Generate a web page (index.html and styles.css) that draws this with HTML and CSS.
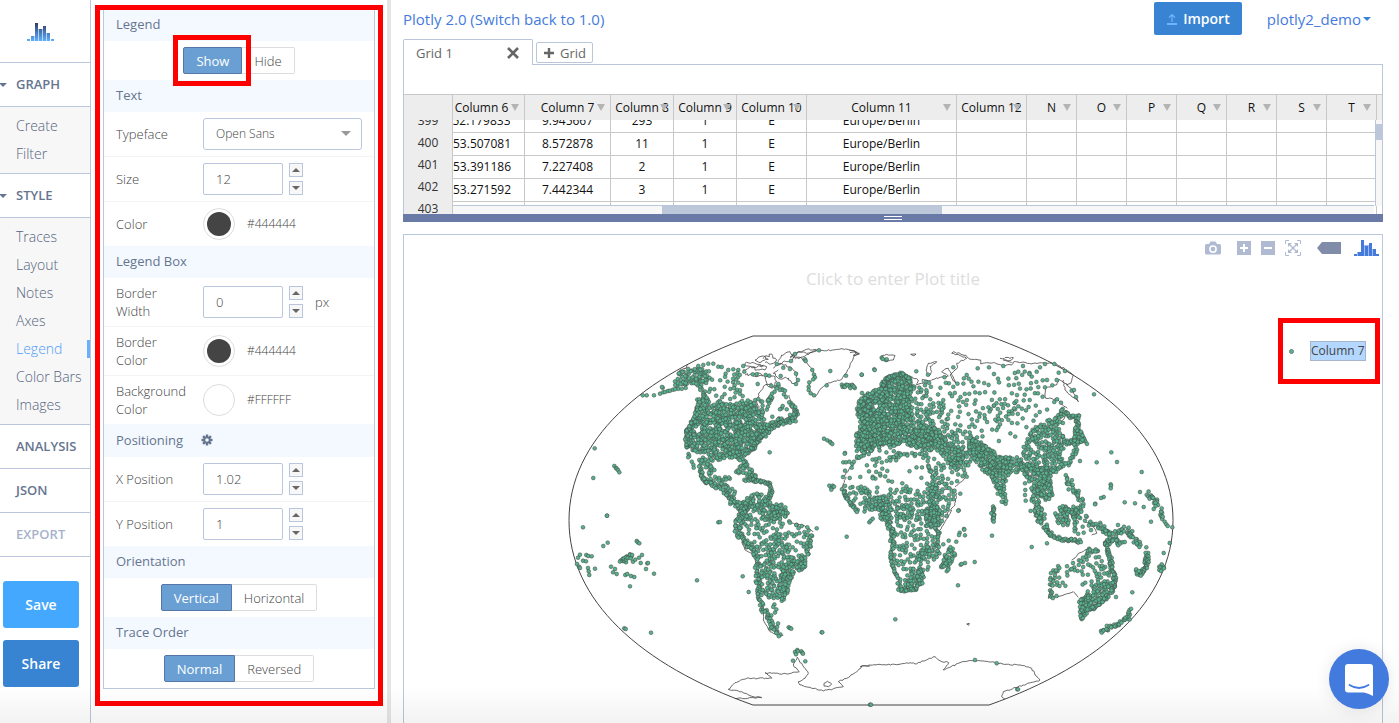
FILE: index.html
```html
<!DOCTYPE html>
<html lang="en">
<head>
<meta charset="utf-8">
<title>Plotly 2.0</title>
<link rel="stylesheet" href="styles.css">
</head>
<body>
<nav class="sidebar">
  <a class="logo" href="#" aria-label="Plotly">
    <svg width="27" height="18" viewBox="0 0 27 18">
      <defs><linearGradient id="lg" x1="0" y1="0" x2="0" y2="18" gradientUnits="userSpaceOnUse"><stop offset="0" stop-color="#2c3e5f"/><stop offset="0.5" stop-color="#4478b8"/><stop offset="1" stop-color="#5fb0ff"/></linearGradient></defs>
      <g fill="url(#lg)"><path d="M0 16h3v2H0zM4 13h3v5H4zM8 0h3v18H8zM12 6h3v12h-3zM16 3h3v15h-3zM20 10h3v8h-3zM24 16h3v2h-3z"/><path opacity=".4" d="M7 13h1v5H7zM11 6h1v12h-1zM15 6h1v12h-1zM19 10h1v8h-1z"/></g>
    </svg>
  </a>
  <h2 class="nav-head open">GRAPH</h2>
  <ul class="nav-list">
    <li><a href="#">Create</a></li>
    <li><a href="#">Filter</a></li>
  </ul>
  <h2 class="nav-head open">STYLE</h2>
  <ul class="nav-list">
    <li><a href="#">Traces</a></li>
    <li><a href="#">Layout</a></li>
    <li><a href="#">Notes</a></li>
    <li><a href="#">Axes</a></li>
    <li class="active"><a href="#">Legend</a></li>
    <li><a href="#">Color Bars</a></li>
    <li><a href="#">Images</a></li>
  </ul>
  <h2 class="nav-head">ANALYSIS</h2>
  <h2 class="nav-head">JSON</h2>
  <h2 class="nav-head muted">EXPORT</h2>
  <div class="nav-actions">
    <button class="btn-save" type="button">Save</button>
    <button class="btn-share" type="button">Share</button>
  </div>
</nav>

<aside class="settings">
  <div class="mark panel-mark">
    <div class="panel">
      <h3 class="sec">Legend</h3>
      <div class="toggle-row">
        <div class="toggle"><button type="button" class="on">Show</button><button type="button">Hide</button><span class="mark show-mark"></span></div>
      </div>
      <h3 class="sec">Text</h3>
      <div class="row"><label for="face">Typeface</label>
        <div class="select-wrap"><select id="face"><option>Open Sans</option></select></div></div>
      <div class="row"><label for="size">Size</label><input class="num" id="size" type="text" value="12">
        <span class="spin"><button type="button" class="up" aria-label="More"></button><button type="button" class="down" aria-label="Less"></button></span></div>
      <div class="row"><span class="label">Color</span><button type="button" class="swatch dark" aria-label="Text color"></button><span class="hex">#444444</span></div>
      <h3 class="sec">Legend Box</h3>
      <div class="row tall"><label for="bw">Border Width</label><input class="num" id="bw" type="text" value="0">
        <span class="spin"><button type="button" class="up" aria-label="More"></button><button type="button" class="down" aria-label="Less"></button></span><span class="unit">px</span></div>
      <div class="row tall"><span class="label">Border Color</span><button type="button" class="swatch dark" aria-label="Border color"></button><span class="hex">#444444</span></div>
      <div class="row tall"><span class="label">Background Color</span><button type="button" class="swatch" aria-label="Background color"></button><span class="hex">#FFFFFF</span></div>
      <h3 class="sec with-icon">Positioning
        <svg class="gear" width="12" height="12" viewBox="0 0 12 12"><g stroke="#66758f" stroke-width="2.4"><path d="M6 0.5V11.5M0.5 6H11.5M2.1 2.1L9.9 9.9M9.9 2.1L2.1 9.9"/></g><circle cx="6" cy="6" r="3.6" fill="#66758f"/><circle cx="6" cy="6" r="1.8" fill="#f4f9ff"/></svg>
      </h3>
      <div class="row"><label for="xp">X Position</label><input class="num" id="xp" type="text" value="1.02">
        <span class="spin"><button type="button" class="up" aria-label="More"></button><button type="button" class="down" aria-label="Less"></button></span></div>
      <div class="row"><label for="yp">Y Position</label><input class="num" id="yp" type="text" value="1">
        <span class="spin"><button type="button" class="up" aria-label="More"></button><button type="button" class="down" aria-label="Less"></button></span></div>
      <h3 class="sec">Orientation</h3>
      <div class="toggle-row"><div class="toggle"><button type="button" class="on">Vertical</button><button type="button">Horizontal</button></div></div>
      <h3 class="sec">Trace Order</h3>
      <div class="toggle-row"><div class="toggle"><button type="button" class="on">Normal</button><button type="button">Reversed</button></div></div>
    </div>
  </div>
</aside>

<main class="main">
  <header class="top">
    <a href="#">Plotly 2.0 (Switch back to 1.0)</a>
    <div class="top-right">
      <button class="import" type="button">
        <svg width="12" height="12" viewBox="0 0 12 12" fill="none" stroke="#6fb4ff"><path d="M1 11H11" stroke-width="2"/><path d="M6 9V2M3 4.5L6 1.5L9 4.5" stroke-width="1.2"/></svg>
        Import</button>
      <a class="user" href="#">plotly2_demo</a>
    </div>
  </header>
  <div class="tabs">
    <div class="tab"><span>Grid 1</span>
      <button type="button" class="bare" aria-label="Close"><svg width="14" height="14" viewBox="0 0 14 14" stroke="#666" stroke-width="2.6"><path d="M2 2L12 12M12 2L2 12"/></svg></button></div>
    <button class="add" type="button"><svg width="12" height="12" viewBox="0 0 12 12" stroke="#666" stroke-width="2.4"><path d="M6 1V11M1 6H11"/></svg>Grid</button>
  </div>
  <section class="sheet">
    <div class="sheet-view">
      <div class="row-nums"><div class="corner"></div><ol><li>399</li><li>400</li><li>401</li><li>402</li><li>403</li></ol></div>
      <div class="cells">
        <table>
          <colgroup><col class="w72"><col class="w86"><col class="w63"><col class="w63"><col class="w70"><col class="w150"><col class="w70"><col class="w50"><col class="w50"><col class="w50"><col class="w50"><col class="w50"><col class="w50"><col class="w50"><col></colgroup>
          <thead><tr><th>Column 6</th><th>Column 7</th><th>Column 8</th><th>Column 9</th><th>Column 10</th><th>Column 11</th><th>Column 12</th><th>N</th><th>O</th><th>P</th><th>Q</th><th>R</th><th>S</th><th>T</th><th class="end"></th></tr></thead>
          <tbody>
            <tr class="cut"><td><div>52.179833</div></td><td><div>9.945667</div></td><td><div>293</div></td><td><div>1</div></td><td><div>E</div></td><td><div>Europe/Berlin</div></td><td></td><td></td><td></td><td></td><td></td><td></td><td></td><td></td><td class="end"></td></tr>
            <tr><td>53.507081</td><td>8.572878</td><td>11</td><td>1</td><td>E</td><td>Europe/Berlin</td><td></td><td></td><td></td><td></td><td></td><td></td><td></td><td></td><td class="end"></td></tr>
            <tr><td>53.391186</td><td>7.227408</td><td>2</td><td>1</td><td>E</td><td>Europe/Berlin</td><td></td><td></td><td></td><td></td><td></td><td></td><td></td><td></td><td class="end"></td></tr>
            <tr><td>53.271592</td><td>7.442344</td><td>3</td><td>1</td><td>E</td><td>Europe/Berlin</td><td></td><td></td><td></td><td></td><td></td><td></td><td></td><td></td><td class="end"></td></tr>
            <tr><td></td><td></td><td></td><td></td><td></td><td></td><td></td><td></td><td></td><td></td><td></td><td></td><td></td><td></td><td class="end"></td></tr>
          </tbody>
        </table>
        <div class="hscroll"><i></i></div>
        <div class="vscroll"><i></i></div>
      </div>
    </div>
    <div class="splitter"><i></i></div>
  </section>
  <section class="chart">
    <svg class="map" id="map" viewBox="404 235 978 488" preserveAspectRatio="xMidYMin meet">
      <g fill="none" stroke="#444" stroke-width="1">
        <path d="M753 336C640 376 569 441 569 520.500C569 600 640 665 753 705H989C1102 665 1173 600 1173 520.500C1173 441 1102 376 989 336Z"/>
        <path id="coast" stroke-width="0.8"/>
      </g>
      <g id="points" fill="#57b28d" stroke="#444" stroke-opacity="0.85" stroke-width="0.6"></g>
    </svg>
    <div class="plot-title">Click to enter Plot title</div>
    <div class="modebar">
      <button type="button" class="bare" aria-label="Download plot"><svg width="16" height="14" viewBox="0 0 16 14"><path fill="#b0bbd3" fill-rule="evenodd" d="M1.500 3H4L5.500 0.500H10.500L12 3H14.500Q16 3 16 4.500V12Q16 13.500 14.500 13.500H1.500Q0 13.500 0 12V4.500Q0 3 1.500 3ZM8 4.200A3.900 3.900 0 1 0 8 12A3.900 3.900 0 1 0 8 4.200Z"/><circle cx="8" cy="8.100" r="2.300" fill="#b0bbd3"/></svg></button>
      <button type="button" class="bare" aria-label="Zoom in"><svg width="14" height="14" viewBox="0 0 14 14"><path fill="#b0bbd3" d="M0 0h14v14H0z"/><path stroke="#fff" stroke-width="2" d="M7 3v8M3 7h8"/></svg></button>
      <button type="button" class="bare" aria-label="Zoom out"><svg width="14" height="14" viewBox="0 0 14 14"><path fill="#b0bbd3" d="M0 0h14v14H0z"/><path stroke="#fff" stroke-width="2" d="M3 7h8"/></svg></button>
      <button type="button" class="bare" aria-label="Reset view"><svg width="16" height="16" viewBox="0 0 16 16" fill="none" stroke="#b0bbd3"><path d="M0.500 4V0.500H4M12 0.500H15.500V4M15.500 12V15.500H12M4 15.500H0.500V12"/><path stroke-width="1.400" d="M4 4L12 12M12 4L4 12"/><path fill="#b0bbd3" stroke="none" d="M3 3H7L3 7ZM13 3V7L9 3ZM13 13H9L13 9ZM3 13V9L7 13Z"/></svg></button>
      <button type="button" class="bare tag" aria-label="Hover closest"><svg width="24" height="12" viewBox="0 0 24 12"><path fill="#808ca8" d="M0 6L5 0H24V12H5Z"/></svg></button>
      <a href="#" aria-label="Plotly"><svg width="25" height="16" viewBox="0 0 25 16"><path fill="#9dbcf2" d="M3 12h4v4H3zM10 5h5v11h-5zM18 9h2v7h-2z"/><path fill="#447adb" d="M0 14h3v2H0zM4 12h3v4H4zM7 0h3v16H7zM11 6h3v10h-3zM15 3h3v13h-3zM19 9h3v7h-3zM22 14h3v2h-3z"/></svg></a>
    </div>
    <div class="mark legend-mark"><i class="pt"></i><span class="legend-text">Column 7</span></div>
  </section>
</main>
<div class="fade"></div>
<button class="chat" type="button" aria-label="Open chat">
  <svg width="28" height="32" viewBox="0 0 28 32"><path fill="#fff" d="M3 0H25Q28 0 28 3V32Q23 29 19 28.500H3Q0 28.500 0 25.500V3Q0 0 3 0Z"/><path d="M4.500 21Q14 27 23.500 21" fill="none" stroke="#437ade" stroke-width="1.800" stroke-linecap="round"/></svg>
</button>
<script src="map.js"></script>
</body>
</html>
```

FILE: styles.css
```css
* { box-sizing: border-box; }
body { margin: 0; height: 100vh; display: flex; overflow: hidden; position: relative; background: #fff; font: 13px/18px "Open Sans", sans-serif; color: #66758f; }
button, input, select { font: inherit; margin: 0; }
a { text-decoration: none; color: #447bdc; }
h2, h3, ul, ol { margin: 0; padding: 0; list-style: none; }
svg { display: block; }
.bare { border: 0; padding: 0; background: none; }
.mark { border: 5px solid #f00; }

.sidebar { flex: 0 0 91px; border-right: 1px solid #bac6dc; }
.logo { height: 63px; display: flex; justify-content: center; align-items: center; padding: 2px 10px 0 0; border-bottom: 1px solid #bac6dc; }
.nav-head { height: 44px; padding-left: 16px; font-size: 13px; line-height: 43px; font-weight: 600; border-bottom: 1px solid #bac6dc; position: relative; }
.nav-head.open::before { content: ""; position: absolute; left: -1px; top: 20px; border: 4px solid transparent; border-top-color: #66758f; border-bottom: 0; }
.nav-head.muted { color: #a7b3ca; }
.nav-list { background: #f7f7f7; padding: 5px 0; border-bottom: 1px solid #bac6dc; }
.nav-list li { line-height: 28px; padding-left: 16px; font-size: 14px; font-weight: 300; position: relative; white-space: nowrap; }
.nav-list a { color: #55647e; }
.nav-list .active a { color: #4f9dfa; }
.nav-list .active::after { content: ""; position: absolute; right: 0; top: 5px; width: 3px; height: 18px; background: #69afff; }
.nav-actions { display: flex; flex-direction: column; gap: 12px; padding: 24px 11px 0 3px; }
.nav-actions button { height: 47px; border: 0; border-radius: 3px; color: #fff; font-weight: 600; font-size: 14px; }
.btn-save { background: #45a8ff; }
.btn-share { background: #3884d3; }

.settings { flex: 0 0 300px; padding: 5px 4px 0; border-right: 4px solid #e5e5e5; }
.panel-mark { padding: 0 3px 12px; }
.panel { border: 1px solid #bac6dc; border-top: 0; font-weight: 300; }
.sec { height: 32px; display: flex; align-items: center; gap: 18px; padding: 0 12px 2px; background: #f4f9ff; font-size: 13px; font-weight: 500; line-height: 28px; }
.sec:first-child { height: 31px; padding-bottom: 4px; }
.sec.with-icon { height: 33px; }
.toggle-row { height: 39px; display: flex; align-items: center; justify-content: center; }
.toggle { display: flex; position: relative; }
.toggle button { height: 27px; padding: 0 12px; border: 1px solid #ddd; border-left: 0; border-radius: 0 2px 2px 0; background: #fff; color: #444; line-height: 24px; }
.toggle .on { background: #6a9fd4; border: 1px solid #5676a8; border-radius: 2px 0 0 2px; color: #fff; font-weight: 400; }
.show-mark { position: absolute; left: -10px; top: -12px; width: 78px; height: 51px; }
.row { height: 45px; display: flex; align-items: center; padding: 0 12px; border-bottom: 1px solid #f4f4f6; color: #444; }
.row.tall { height: 49px; }
.row:has(+ .sec) { border-bottom: 0; height: 44px; }
.row.tall:has(+ .sec) { height: 48px; }
.row label, .row .label { flex: 0 0 87px; padding-right: 14px; }
.select-wrap { flex: 1; position: relative; }
.select-wrap::after { content: ""; position: absolute; right: 11px; top: 13px; border: 5px solid transparent; border-top-color: #999; border-bottom: 0; pointer-events: none; }
select { width: 100%; height: 32px; padding: 0 12px; border: 1px solid #bac6dc; border-radius: 3px; background: #fff; color: #444; font-size: 12px; appearance: none; }
.num { width: 80px; height: 32px; padding: 0 12px; border: 1px solid #bac6dc; border-radius: 2px; color: #444; background: #fff; }
.spin { display: flex; flex-direction: column; gap: 4px; margin-left: 6px; }
.spin button { width: 14px; height: 14px; padding: 0; border: 1px solid #bac6dc; background: #f7f7f7; display: flex; align-items: center; justify-content: center; }
.spin button::after { content: ""; border: 4px solid transparent; }
.up::after { border-bottom-color: #666 !important; border-top: 0 !important; }
.down::after { border-top-color: #666 !important; border-bottom: 0 !important; }
.unit { margin-left: 12px; }
.swatch { width: 32px; height: 32px; padding: 3px; border: 1px solid #ddd; border-radius: 50%; background: #fff content-box; }
.swatch.dark { background-color: #444; }
.hex { margin-left: 12px; font-size: 12px; }

.main { flex: 1; min-width: 0; display: flex; flex-direction: column; padding: 0 16px 0 12px; }
.top { height: 39px; display: flex; justify-content: space-between; align-items: center; font-size: 15px; padding-bottom: 2px; }
.top-right { display: flex; align-items: center; gap: 25px; padding-right: 12px; }
.import { height: 33px; display: flex; align-items: center; gap: 5px; padding: 0 12px; border: 0; border-radius: 2px; background: #3884d3; color: #fff; font-size: 14px; font-weight: 600; }
.user { display: flex; align-items: center; gap: 2px; }
.user::after { content: ""; border: 4px solid transparent; border-top-color: #3884d3; border-bottom: 0; }
.tabs { display: flex; align-items: flex-start; gap: 3px; height: 25px; }
.tab { width: 130px; height: 26px; display: flex; align-items: center; justify-content: space-between; padding: 0 12px; border: 1px solid #bac6dc; border-bottom: 0; background: #fff; border-radius: 2px 2px 0 0; position: relative; z-index: 1; color: #666; }
.add { height: 21px; margin-top: 3px; padding: 0 6px; display: flex; align-items: center; gap: 5px; border: 1px solid #bac6dc; border-radius: 2px; background: #fff; color: #666; }
.sheet { border: 1px solid #bac6dc; border-bottom: 0; padding-top: 29px; }
.sheet-view { display: flex; height: 120px; border-top: 1px solid #c8c8c8; overflow: hidden; font-size: 12px; color: #111; }
.row-nums { flex: 0 0 49px; background: #ededed; border-right: 1px solid #c8c8c8; text-align: center; overflow: hidden; }
.corner { height: 25px; }
.row-nums ol { height: 94px; overflow: hidden; display: flex; flex-direction: column; justify-content: flex-start; }
.row-nums li { flex: 0 0 22px; line-height: 22px; color: #333; }
.row-nums li:first-child { flex-basis: 12px; display: flex; align-items: flex-end; justify-content: center; overflow: hidden; }
.cells { flex: 1; min-width: 0; position: relative; overflow: hidden; }
table { width: 100%; table-layout: fixed; border-collapse: separate; border-spacing: 0; }
.w72 { width: 72px; } .w86 { width: 86px; } .w63 { width: 63px; } .w70 { width: 70px; } .w150 { width: 150px; } .w50 { width: 50px; }
th, td { padding: 0; height: 23px; border-right: 1px solid #c8c8c8; border-bottom: 1px solid #c8c8c8; text-align: center; font-weight: 400; line-height: 20px; white-space: nowrap; }
th { height: 25px; background: #ededed; border-bottom: 0; position: relative; }
th::after { content: ""; position: absolute; right: 5px; top: 9px; border: 4px solid transparent; border-top: 7px solid #b4b4b4; border-bottom: 0; }
th:first-child, td:first-child { padding-right: 14px; }
th.end::after { content: none; }
.end { border-right: 0; }
.cut td { height: 13px; }
.cut div { height: 12px; overflow: hidden; display: flex; align-items: flex-end; justify-content: center; line-height: 22px; }
.hscroll { position: absolute; left: 0; right: 8px; bottom: 0; height: 9px; border-top: 1px solid #bac6dc; background: #f7f7f7; }
.hscroll i { position: absolute; left: 22.7%; width: 30.4%; top: 0; bottom: 0; background: #bcc7da; }
.vscroll { position: absolute; right: 0; top: 25px; bottom: 8px; width: 7px; border-left: 1px solid #bac6dc; background: #f7f7f7; }
.vscroll i { position: absolute; left: 0; right: 0; top: 4px; height: 16px; background: #bcc7da; }
.splitter { height: 8px; margin: 0 -1px; background: #6a7aa6; display: flex; align-items: center; justify-content: center; }
.splitter i { width: 18px; height: 4px; border: solid #fff; border-width: 1px 0; }
.chart { flex: 1; margin-top: 12px; border: 1px solid #bac6dc; border-bottom: 0; position: relative; min-height: 0; }
.map { width: 100%; }
.plot-title { position: absolute; left: 0; right: 0; top: 32px; text-align: center; font-size: 17px; line-height: 24px; color: #ddd; }
.modebar { position: absolute; right: 3px; top: 5px; display: flex; align-items: center; height: 16px; gap: 10px; }
.modebar button:first-child { margin-right: 6px; }
.modebar .tag { margin: 0 3px 0 6px; }
.legend-mark { position: absolute; right: 2px; top: 83px; width: 102px; height: 66px; display: flex; align-items: center; padding-left: 6px; gap: 16px; }
.pt { width: 5px; height: 5px; border-radius: 50%; background: #57b28d; border: 1px solid #5c8474; }
.legend-text { height: 20px; border: 1px solid #a8b3cc; background: #b3d7ff; color: #444; font-size: 12px; line-height: 18px; white-space: nowrap; }
.fade { position: absolute; left: 0; right: 0; bottom: 0; height: 36px; background: linear-gradient(rgba(0, 0, 0, 0), rgba(0, 0, 0, 0.05)); pointer-events: none; }
.chat { position: absolute; right: 10px; bottom: 14px; width: 60px; height: 60px; padding: 2px 0 0; border: 0; border-radius: 50%; background: #437ade; box-shadow: 0 1px 16px rgba(0, 0, 0, 0.1); display: flex; align-items: center; justify-content: center; }
```

FILE: map.js
```js
// Map tiles: each origin is the top-left of a tile; tile units are a third of a map unit.
const tiles = { A: [560, 320], B: [860, 320], C: [560, 510], D: [860, 510] };

let seed = 7;
const rnd = () => (seed = (seed * 16807) % 2147483647) / 2147483647;
const parse = s => s.trim().split(/\s+/).map(p => p.split(',').map(Number));
const place = (t, [x, y]) => [tiles[t][0] + x / 3, tiles[t][1] + y / 3];
const out = [];

function inside(p, poly) {
  let c = false;
  for (let i = 0, j = poly.length - 1; i < poly.length; j = i++) {
    const [xi, yi] = poly[i], [xj, yj] = poly[j];
    if ((yi > p[1]) !== (yj > p[1]) && p[0] < (xj - xi) * (p[1] - yi) / (yj - yi) + xi) c = !c;
  }
  return c;
}

// Scatter stations in a polygon with an average spacing near `gap`, leaving holes clear.
function fill(t, gap, s, holes = []) {
  const poly = parse(s), hs = holes.map(parse), got = [];
  const xs = poly.map(p => p[0]), ys = poly.map(p => p[1]);
  const x0 = Math.min(...xs), x1 = Math.max(...xs), y0 = Math.min(...ys), y1 = Math.max(...ys);
  const tries = (x1 - x0) * (y1 - y0) / (gap * gap) * 1.1;
  for (let i = 0; i < tries; i++) {
    const p = [x0 + rnd() * (x1 - x0), y0 + rnd() * (y1 - y0)];
    if (!inside(p, poly) || hs.some(h => inside(p, h))) continue;
    if (got.some(q => Math.hypot(q[0] - p[0], q[1] - p[1]) < gap * 0.55)) continue;
    got.push(p);
  }
  got.forEach(p => out.push(place(t, p)));
}

// Stations strung along a line with some sideways scatter.
function band(t, width, gap, s) {
  const l = parse(s);
  for (let i = 1; i < l.length; i++) {
    const [a, b] = [l[i - 1], l[i]];
    const n = Math.max(1, Math.round(Math.hypot(b[0] - a[0], b[1] - a[1]) / gap));
    for (let k = 0; k < n; k++) {
      const f = (k + rnd() * 0.5) / n;
      out.push(place(t, [a[0] + (b[0] - a[0]) * f + (rnd() - 0.5) * width, a[1] + (b[1] - a[1]) * f + (rnd() - 0.5) * width]));
    }
  }
}
const dots = (t, s) => parse(s).forEach(p => out.push(place(t, p)));

// North America
fill('A', 7, '345,180 358,158 400,140 440,150 448,180 430,200 400,195 375,205 350,212 340,195');
dots('A', '357,160 415,138 430,135 445,131 460,131 475,140 485,141 505,150 520,148 535,150 550,138 248,226 260,226 282,226 300,221 309,217 315,216 324,213 330,212 339,209 345,208 308,203 306,201');
fill('A', 14, '445,150 480,170 500,155 535,155 550,180 545,215 555,240 480,238 440,225');
band('A', 14, 4, '425,200 432,225 418,255 412,280');
fill('A', 6, '410,235 440,232 455,258 475,240 520,250 560,238 585,250 600,285 625,305 660,290 690,287 712,278 700,300 670,308 640,322 620,345 600,360 580,390 555,402 550,415 500,412 475,420 440,402 400,395 385,385 375,365 378,330 400,300 412,280', ['485,318 502,320 498,332 487,330', '400,322 425,318 422,335 412,345', '420,398 445,400 440,415 425,412', '500,230 540,235 520,245']);
band('A', 10, 3, '385,385 378,360 380,335 400,300 412,280');
band('A', 10, 3, '712,278 700,296 640,318 620,340 600,355 580,385 553,402');
band('A', 8, 9, '585,250 592,230 610,255 605,285 640,230 620,245 655,200 672,210 680,235');
dots('A', '553,155 578,163 590,163 593,192 617,165 628,167 650,132 670,143 662,168 690,147 708,161 714,180 708,192 634,197 655,192 660,210 675,212 650,205 637,290 665,265 660,268 668,258 680,268 692,248 697,260 707,270 670,313 690,308 707,304 629,397');
band('A', 10, 5, '690,250 707,272 690,288');
band('A', 8, 9, '387,398 388,415 402,430 400,450');
fill('A', 8, '415,420 440,400 462,420 464,462 488,470 512,460 510,478 495,488 520,505 530,520 525,535 540,552 512,550 495,520 470,500 440,494 420,470', ['425,402 442,402 438,420']);
band('A', 10, 5, '418,450 430,480 465,497 500,520 520,545');
fill('A', 7, '535,415 555,412 570,440 590,465 600,480 560,487 540,472 525,455 538,448');
band('A', 8, 3, '565,480 600,484 625,488 634,510 628,535 618,550');
fill('A', 7, '500,530 530,548 560,528 590,518 625,530 640,555 670,562 685,580 680,600 540,600 545,575 510,552', ['555,575 600,572 610,595 570,590']);
dots('A', '104,385 100,474 163,438 168,444 170,446 174,450 178,457 141,587');
// Greenland, Iceland and the Atlantic
dots('A', '811,153 905,164 777,91 800,196 858,167 906,219 705,102 693,123 735,118 737,123 757,150 762,164 765,172 760,178 748,187 746,200 746,210 752,220 762,226 792,356 802,361 810,365 812,368 817,372 855,399 854,401');
band('A', 12, 3, '848,198 865,200 885,198');
dots('A', '808,497 818,497 815,505 822,500 814,509 850,427 858,427 868,425 877,432 875,443 855,452 849,471 869,474');

// South America
fill('C', 13, '545,-20 680,0 690,38 740,50 760,75 748,110 740,150 725,180 705,185 690,225 675,270 650,285 655,320 658,345 640,365 625,350 610,305 598,265 595,220 590,170 580,135 550,105 525,70 522,45');
band('C', 18, 3, '553,-10 535,30 532,65 550,95 575,115');
band('C', 12, 4, '575,110 592,150 590,190 598,250 606,290 625,320 640,355 662,375');
fill('C', 7, '635,-18 680,-18 675,15 640,15');
fill('C', 6.5, '700,150 735,140 740,165 725,180 705,190 690,225 675,270 650,265 655,220 670,180');
fill('C', 11, '600,100 680,60 700,130 650,260 600,260');
band('C', 14, 5, '750,70 745,110 738,150');
dots('C', '690,38 709,45 725,48 742,52 770,55 860,80 686,352 690,354 694,356 785,367 787,367 475,37 480,36 548,199 566,246 411,211 230,93 233,97 238,100');
dots('C', '141,17 69,52 130,108 143,98 60,134 54,143 51,162 57,170 60,174 69,152 78,154 84,174 86,184 88,195 105,176 79,135 85,138 95,139 153,170 159,187 165,177 170,192 183,151 190,153 198,157 200,140 210,133 214,140 219,155 226,149 237,143 246,135 242,159 262,160 264,159 258,177 282,191 196,195 202,192 213,198 223,201 210,229 193,355 197,357 273,368');
band('C', 10, 3, '183,151 200,145 215,136');
dots('C', '705,426 712,420 714,424 708,433 724,424 727,428 729,431 699,452 736,454 930,584');

// Europe
fill('A', 6, '890,265 905,235 925,220 932,225 932,312 905,300 888,280');
fill('A', 6, '888,335 932,332 932,385 915,400 888,378');
fill('B', 5.4, '-5,240 20,222 50,208 75,175 120,158 150,172 160,205 148,235 155,290 190,312 235,325 250,370 200,380 165,385 125,365 110,380 80,375 40,370 0,350', ['35,250 58,248 60,262 40,268']);
band('B', 8, 3, '70,200 80,175 120,160 148,172');
fill('B', 7, '0,345 60,350 70,375 30,395 -20,395');
dots('B', '5,164 43,148 44,150 65,113 68,117 78,120 80,118 169,154 204,164 163,200 178,203 195,196 148,185');
// Russia and Siberia
fill('B', 11, '150,205 185,200 245,240 265,290 250,330 190,310 150,280');
fill('B', 17, '185,185 260,170 320,190 330,250 340,330 300,350 240,320 240,240');
fill('B', 22, '310,170 540,150 570,190 590,260 560,290 480,350 420,370 340,340 320,260');
fill('B', 14, '340,245 400,250 470,240 490,270 460,310 400,330 350,300');
dots('B', '280,142 353,145 387,142 402,162 430,138 414,176 475,155 489,138 508,162 530,155 540,142 555,132 583,132 596,158 615,153 702,223 635,212 642,210 648,231 555,202 577,196 590,180 591,238 603,248 608,267 320,165 326,176 548,181 561,180 534,220');
// Middle East, Central Asia, India
fill('B', 7.5, '180,315 235,325 270,370 310,385 310,450 280,450 240,400 190,385');
fill('B', 11, '250,330 340,335 390,390 380,430 310,440 280,400');
fill('B', 14, '205,400 270,430 325,455 300,495 245,500 205,455');
band('B', 14, 8, '190,385 200,430 220,465 230,520');
fill('B', 6.2, '325,350 370,370 420,410 480,412 500,440 470,460 430,460 395,470 365,450 350,420 325,400');
fill('B', 7, '385,450 450,455 432,500 442,560 428,558 400,490');
band('B', 8, 3, '400,560 401,600');
// East Asia
fill('B', 8, '490,400 480,385 510,330 560,300 600,285 610,310 595,350 612,380 605,430 560,455 505,450', ['485,330 500,325 500,380 487,380']);
fill('B', 6.2, '480,430 520,430 555,450 615,435 590,455 570,470 582,520 560,545 535,520 515,495 490,460');
band('B', 22, 3, '520,505 528,550 548,600');
dots('B', '495,490 496,510 495,525 497,542');
band('B', 12, 3, '600,290 610,275 635,290 655,290 652,320 665,355 678,370');
band('B', 16, 3, '665,355 640,365 620,370 600,345');
band('B', 12, 5, '650,365 645,400 630,430 605,440');
fill('B', 6, '645,320 665,325 672,368 640,375');
band('B', 18, 3, '625,472 635,505 660,530 665,555');
fill('B', 8, '585,590 600,555 640,560 670,555 660,600');
dots('B', '754,397 710,427 771,426 845,456 660,423 752,493 753,497 752,505 731,531 723,534 706,551 705,553 794,547 825,550 851,561 840,516 680,590');
band('B', 16, 3, '862,520 880,535 895,560');
band('B', 6, 4, '903,575 905,600');

// Africa
band('A', 12, 6, '885,420 895,408 925,402');
fill('B', 13, '-10,400 40,370 120,385 125,420 50,430');
band('B', 10, 7, '100,410 130,402 190,405');
fill('B', 26, '0,430 190,430 215,500 0,500');
fill('A', 11, '845,490 930,500 930,575 895,575 875,560 845,520');
band('A', 8, 4, '848,510 862,535 880,560 895,575');
fill('B', 11, '0,510 50,500 190,510 250,480 290,500 285,540 255,590 240,600 60,600 60,575 0,565');
fill('B', 7, '50,530 80,530 90,570 70,580 30,560');
fill('B', 8, '195,490 230,490 240,600 190,600 210,560');
dots('B', '67,446 60,461 96,485 127,490 38,470 38,475 272,443 301,521 296,571 315,460 320,470');
fill('D', 12, '60,-10 240,-10 240,130 205,180 185,220 150,240 115,240 100,180 90,110 88,50');
band('D', 14, 4, '65,-5 80,30 95,65 98,100');
band('D', 10, 6, '98,100 95,150 110,205');
fill('D', 7, '160,170 195,180 190,215 165,238 140,243 115,243 115,232 145,215');
band('D', 6, 5, '115,240 140,242 165,238 188,215');
fill('D', 7, '195,0 240,0 235,55 200,50');
fill('D', 8, '165,120 225,100 210,140 170,160');
band('D', 6, 6, '232,60 235,125');
fill('D', 6.5, '270,112 287,108 285,135 262,188 243,175 248,145');
dots('D', '28,37 32,32 38,26 312,57 313,59 299,68 297,75 315,76 266,92 289,95 250,103 396,77 394,10 402,15 401,25 401,35 302,164 305,162 315,159 344,156 294,226 106,328 515,111 561,100 295,2 260,18 246,33 345,450 410,460 472,538 474,538 33,584');
// South-east Asia and Oceania
band('D', 20, 3, '520,0 540,20 555,50 570,68');
band('D', 10, 3, '560,65 580,80 610,88 665,95');
fill('D', 7.5, '585,10 605,-15 635,0 625,50 595,45');
band('D', 14, 6, '635,0 645,30 640,60 655,72');
dots('D', '664,5 678,18 675,32 690,38 668,50 671,68 693,60');
band('D', 16, 4, '690,40 720,48 745,68 770,95 795,105');
fill('D', 6.5, '715,45 770,70 755,105 735,105 735,75');
band('D', 18, 3, '770,72 800,60 825,90 840,110');
band('D', 12, 2, '860,130 860,160 855,180 838,192 830,178');
dots('D', '774,45 792,50 873,35 937,52 929,99 911,129 905,163 898,170 900,173 898,180 903,183 911,171 912,175 859,112 768,261 817,247 904,5 908,20 914,35 919,43 923,48 905,-5 881,-3');
fill('D', 12, '580,178 640,150 690,118 715,120 730,150 752,160 765,210 740,250 700,290 665,330 655,260 690,220 600,240 575,210', ['600,190 650,190 660,215 600,220']);
fill('D', 30, '600,180 690,130 690,220 650,230 600,220');
band('D', 10, 3, '740,90 740,120 752,140 755,175 766,210 755,245 725,275 700,295 665,298 665,328');
band('D', 12, 6, '600,172 578,195 575,230 568,258');
band('D', 10, 7, '570,262 595,258');
fill('D', 7, '700,230 760,215 755,245 715,290 665,305 655,290 655,268 700,250');
fill('D', 8, '678,115 715,115 712,128 680,128');
band('D', 12, 3, '722,368 745,352 775,340 803,325 812,300');

// Coastlines, roughened between the given vertices.
const coasts = [
  ['A', 2, '383,132 378,145 360,150 357,165'],
  ['A', 2, '735,125 755,145 765,175 748,190 745,212 765,230 780,208 800,192 845,178 858,160 870,135 882,108 898,100 870,90 840,87 800,92 775,90 740,88 705,100 690,112 720,112 735,125'],
  ['A', 2, '870,98 890,96 880,106 898,102 885,94 868,92'],
  ['A', 4, '555,130 580,128 610,136 590,142 560,138 555,130'],
  ['A', 4, '550,150 575,140 590,150 615,150 620,140 600,135'],
  ['A', 4, '555,165 600,160 610,168 575,166'],
  ['A', 4, '585,120 610,108 625,118 600,128 585,120'],
  ['A', 4, '610,116 635,102 650,120 640,130 615,128'],
  ['A', 4, '655,125 665,105 690,95 705,110 685,125 655,130'],
  ['A', 3, '695,110 720,96 750,98 770,92 740,104 705,118'],
  ['A', 4, '640,145 660,130 690,140 705,155 715,185 695,190 680,175 655,175 640,160 655,150'],
  ['A', 4, '615,170 640,168 650,185 635,205 620,195 615,170'],
  ['A', 3, '590,245 600,215 615,195 635,190'],
  ['A', 2, '600,290 597,260 583,240'],
  ['A', 2, '687,225 690,245 705,255'],
  ['A', 2, '858,470 850,490 845,510'],
  ['A', 2, '850,470 868,445 885,425'],
  ['B', 2, '62,110 80,103 105,107 100,120 75,124 62,110'],
  ['B', 1, '152,103 168,102 160,107 152,103'],
  ['B', 2, '230,125 205,130 198,150 207,168 215,155 210,140 230,125'],
  ['B', 2, '150,170 175,180 170,195 190,190 187,178 205,182 240,172 265,168 245,155 265,145 280,170 287,190 270,165 285,150 293,142 290,130 320,115 305,108 275,100 280,95 318,106 330,118 362,120 362,132 400,128 430,136 455,135 460,126 520,130 555,130 590,132 640,165 632,190 618,195'],
  ['B', 2, '420,115 460,113 450,122 430,120 455,128'],
  ['B', 2, '610,180 615,210 655,245 640,215 615,190 597,178 590,195 555,205 557,235 592,238 622,265'],
  ['B', 2, '605,270 615,290 603,305'],
  ['B', 2, '200,440 225,480 235,510 275,505 290,520 285,555 245,600'],
  ['B', 2, '285,500 310,480 322,465'],
  ['D', 1, '275,0 262,25 240,60'],
  ['D', 1, '95,100 92,135 98,160'],
  ['D', 1, '240,125 215,145'],
  ['D', 2, '575,235 565,265 600,258 640,245 655,262'],
  ['D', 2, '635,150 660,128 690,112'],
  ['D', 2, '695,75 710,70 700,45 675,35'],
  ['C', 1, '545,95 555,120 580,132 595,180 598,240'],
  ['C', 1, '688,38 735,48 760,65'],
  ['C', 1, '610,290 610,330 630,365 650,375 670,376'],
  ['C', 2, '525,566 605,563 570,557 545,545 505,538 525,518 560,505 635,505 615,488 635,490 680,492 718,485 700,465 712,442 725,460 745,490 735,505 715,515 720,525 750,532 790,543 850,530 835,515 860,505 890,485 905,468 930,468'],
  ['C', 1, '792,520 802,514 815,522 805,530 792,528 792,520'],
  ['D', 2, '0,470 60,463 110,464 150,458 165,462 225,440 240,452 266,458 250,480 300,458 345,450 385,455 440,463 480,465 515,475 525,495 540,510 490,525 430,545 425,560 435,568'],
  ['D', 1, '320,342 328,340 326,346 320,342']
];
let d = '';
for (const [t, amp, s] of coasts) {
  const l = parse(s);
  l.forEach((p, i) => {
    if (i) {
      const q = l[i - 1], n = Math.max(1, Math.round(Math.hypot(p[0] - q[0], p[1] - q[1]) / 6));
      for (let k = 1; k < n; k++) {
        const m = place(t, [q[0] + (p[0] - q[0]) * k / n + (rnd() - 0.5) * amp * 2, q[1] + (p[1] - q[1]) * k / n + (rnd() - 0.5) * amp * 2]);
        d += 'L' + m.map(v => v.toFixed(1));
      }
    }
    d += (i ? 'L' : 'M') + place(t, p).map(v => v.toFixed(1));
  });
}
document.getElementById('coast').setAttribute('d', d);

const g = document.getElementById('points');
for (const [x, y] of out) {
  const c = document.createElementNS('http://www.w3.org/2000/svg', 'circle');
  c.setAttribute('cx', x.toFixed(1));
  c.setAttribute('cy', y.toFixed(1));
  c.setAttribute('r', 1.9);
  g.appendChild(c);
}
```
